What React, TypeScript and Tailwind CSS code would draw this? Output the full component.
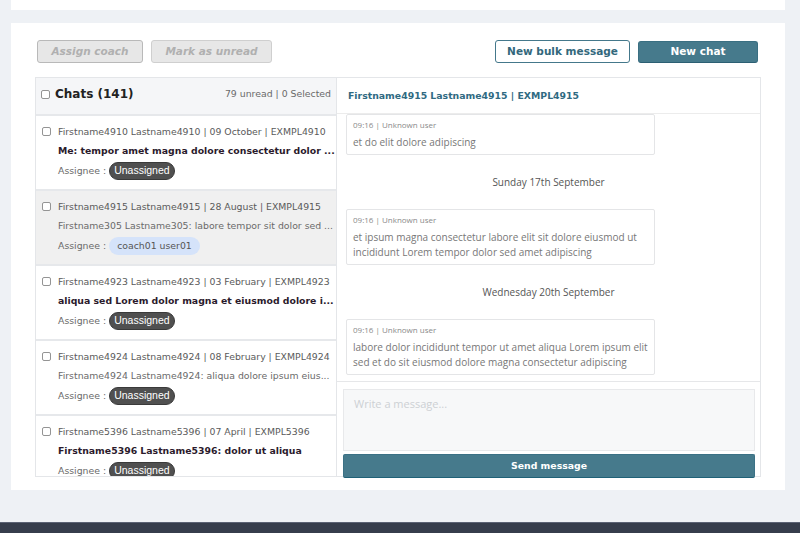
import React from "react";

type Chat = {
  id: string;
  meta: string;
  preview: string;
  unread: boolean;
  assignee: string | null;
  selected?: boolean;
};

const chats: Chat[] = [
  {
    id: "4910",
    meta: "Firstname4910 Lastname4910 | 09 October | EXMPL4910",
    preview: "Me: tempor amet magna dolore consectetur dolor ...",
    unread: true,
    assignee: null,
  },
  {
    id: "4915",
    meta: "Firstname4915 Lastname4915 | 28 August | EXMPL4915",
    preview: "Firstname305 Lastname305: labore tempor sit dolor sed ...",
    unread: false,
    assignee: "coach01 user01",
    selected: true,
  },
  {
    id: "4923",
    meta: "Firstname4923 Lastname4923 | 03 February | EXMPL4923",
    preview: "aliqua sed Lorem dolor magna et eiusmod dolore i...",
    unread: true,
    assignee: null,
  },
  {
    id: "4924",
    meta: "Firstname4924 Lastname4924 | 08 February | EXMPL4924",
    preview: "Firstname4924 Lastname4924: aliqua dolore ipsum eius...",
    unread: false,
    assignee: null,
  },
  {
    id: "5396",
    meta: "Firstname5396 Lastname5396 | 07 April | EXMPL5396",
    preview: "Firstname5396 Lastname5396: dolor ut aliqua",
    unread: true,
    assignee: null,
  },
];

const Checkbox: React.FC = () => (
  <span className="block w-[9px] h-[9px] shrink-0 border border-[#949494] rounded-[2px] bg-white"></span>
);

const MessageCard: React.FC<{ text: string }> = ({ text }) => (
  <div className="w-[309px] shrink-0 border border-[#e4e5e7] rounded-[2px] bg-white px-[6px] pt-[4px] pb-[4px] font-['Open_Sans',sans-serif]">
    <div className="text-[8px] leading-[12px] text-[#8a8a8a]">09:16 | Unknown user</div>
    <div className="mt-[4px] text-[10px] leading-[15px] text-[#777]">{text}</div>
  </div>
);

const DateLabel: React.FC<{ label: string }> = ({ label }) => (
  <div className="h-[54px] shrink-0 flex items-center justify-center font-['Open_Sans',sans-serif] text-[10px] text-[#555]">
    {label}
  </div>
);

const ChatRow: React.FC<{ chat: Chat }> = ({ chat }) => (
  <div
    className={`h-[75px] shrink-0 border-b-2 border-[#e6e8eb] flex pl-[6px] pt-[6px] ${
      chat.selected ? "bg-[#f0f0f0]" : "bg-white"
    }`}
  >
    <div className="h-[19px] flex items-center">
      <Checkbox />
    </div>
    <div className="ml-[7px] flex-1 min-w-0">
      <div className="h-[19px] leading-[19px] text-[#5a5a5a] whitespace-nowrap">{chat.meta}</div>
      <div
        className={`h-[19px] leading-[19px] whitespace-nowrap ${
          chat.unread ? "font-bold text-[#2b1a2c]" : "text-[#6a6a6a]"
        }`}
      >
        {chat.preview}
      </div>
      <div className="h-[21px] flex items-center text-[#6a6a6a]">
        <span>Assignee :</span>
        {chat.assignee ? (
          <span className="ml-[3px] h-[18px] px-[8px] rounded-full bg-[#d5e3fa] text-[#555] flex items-center">
            {chat.assignee}
          </span>
        ) : (
          <span className="ml-[3px] h-[18px] px-[4px] rounded-full bg-[#505050] border border-[#3a3a3a] text-white flex items-center font-['Liberation_Sans',sans-serif] text-[10.5px]">
            Unassigned
          </span>
        )}
      </div>
    </div>
  </div>
);

const App: React.FC = () => {
  return (
    <div className="h-[533px] overflow-hidden bg-[#eef1f5] flex flex-col font-['DejaVu_Sans',sans-serif] text-[9.33px]">
      {/* top card, mostly scrolled out */}
      <div className="mx-[11px] w-[774px] h-[10px] shrink-0 bg-white"></div>

      {/* main card */}
      <div className="mt-[13px] mx-[11px] w-[774px] h-[467px] shrink-0 bg-white px-[24px] pt-[17px] pb-[13px] flex flex-col">
        <div className="h-[23px] flex items-center justify-between">
          <div className="flex items-center gap-[8px] pl-[2px]">
            <button className="h-[23px] w-[106px] rounded-[3px] border border-[#b9b9b9] bg-[#e7e7e7] text-[#b0b0b0] font-bold italic text-[10.5px]">
              Assign coach
            </button>
            <button className="h-[23px] w-[121px] rounded-[3px] border border-[#cfcfcf] bg-[#e7e7e7] text-[#b0b0b0] font-bold italic text-[10.5px]">
              Mark as unread
            </button>
          </div>
          <div className="flex items-center gap-[8px] pr-[3px]">
            <button className="h-[23px] w-[135px] rounded-[3px] border border-[#44788b] bg-white text-[#33687c] font-bold text-[10.5px]">
              New bulk message
            </button>
            <button className="h-[22px] w-[120px] rounded-[3px] border border-[#3a6f82] border-b-[#2c5f73] bg-[#467a8c] text-white font-bold text-[10.5px]">
              New chat
            </button>
          </div>
        </div>

        <div className="mt-[14px] h-[400px] flex border border-[#e4e6e9]">
          {/* chat list */}
          <div className="w-[301px] shrink-0 border-r border-[#e4e6e9] flex flex-col overflow-hidden">
            <div className="h-[38px] shrink-0 bg-[#f5f6f8] border-b-2 border-[#e6e8eb] flex items-center pl-[5px] pr-[5px] pb-[4px]">
              <Checkbox />
              <span className="ml-[5px] font-bold text-[12px] text-[#222]">Chats (141)</span>
              <span className="ml-auto text-[#6a6a6a]">79 unread | 0 Selected</span>
            </div>
            <div className="flex-1 flex flex-col overflow-hidden">
              {chats.map((chat) => (
                <ChatRow key={chat.id} chat={chat} />
              ))}
            </div>
          </div>

          {/* conversation */}
          <div className="flex-1 min-w-0 flex flex-col">
            <div className="h-[36px] shrink-0 border-b border-[#ececec] flex items-center pl-[11px] font-bold text-[#2f6a82]">
              Firstname4915 Lastname4915 | EXMPL4915
            </div>
            <div className="h-[267px] shrink-0 overflow-hidden flex flex-col justify-end px-[9px] pb-[6px]">
              <MessageCard text="et do elit dolore adipiscing" />
              <DateLabel label="Sunday 17th September" />
              <MessageCard text="et ipsum magna consectetur labore elit sit dolore eiusmod ut incididunt Lorem tempor dolor sed amet adipiscing" />
              <DateLabel label="Wednesday 20th September" />
              <MessageCard text="labore dolor incididunt tempor ut amet aliqua Lorem ipsum elit sed et do sit eiusmod dolore magna consectetur adipiscing" />
            </div>
            <div className="flex-1 border-t border-[#e6e7e9] pt-[7px] pl-[6px] pr-[5px] flex flex-col">
              <textarea
                placeholder="Write a message..."
                className="h-[62px] w-full resize-none bg-[#f7f8f9] border border-[#e8e9eb] px-[10px] py-[6px] font-['Open_Sans',sans-serif] text-[11px] text-[#555] placeholder:text-[#cdd0d4] outline-none"
              ></textarea>
              <button className="mt-[3px] h-[24px] w-full rounded-[2px] bg-[#467a8c] border border-[#3b7185] border-b-[#1f6177] text-white font-bold text-[9.33px]">
                Send message
              </button>
            </div>
          </div>
        </div>
      </div>

      <div className="mt-[32px] flex-1 bg-[#363d4c] border-t border-[#5b6274]"></div>
    </div>
  );
};

export default App;
